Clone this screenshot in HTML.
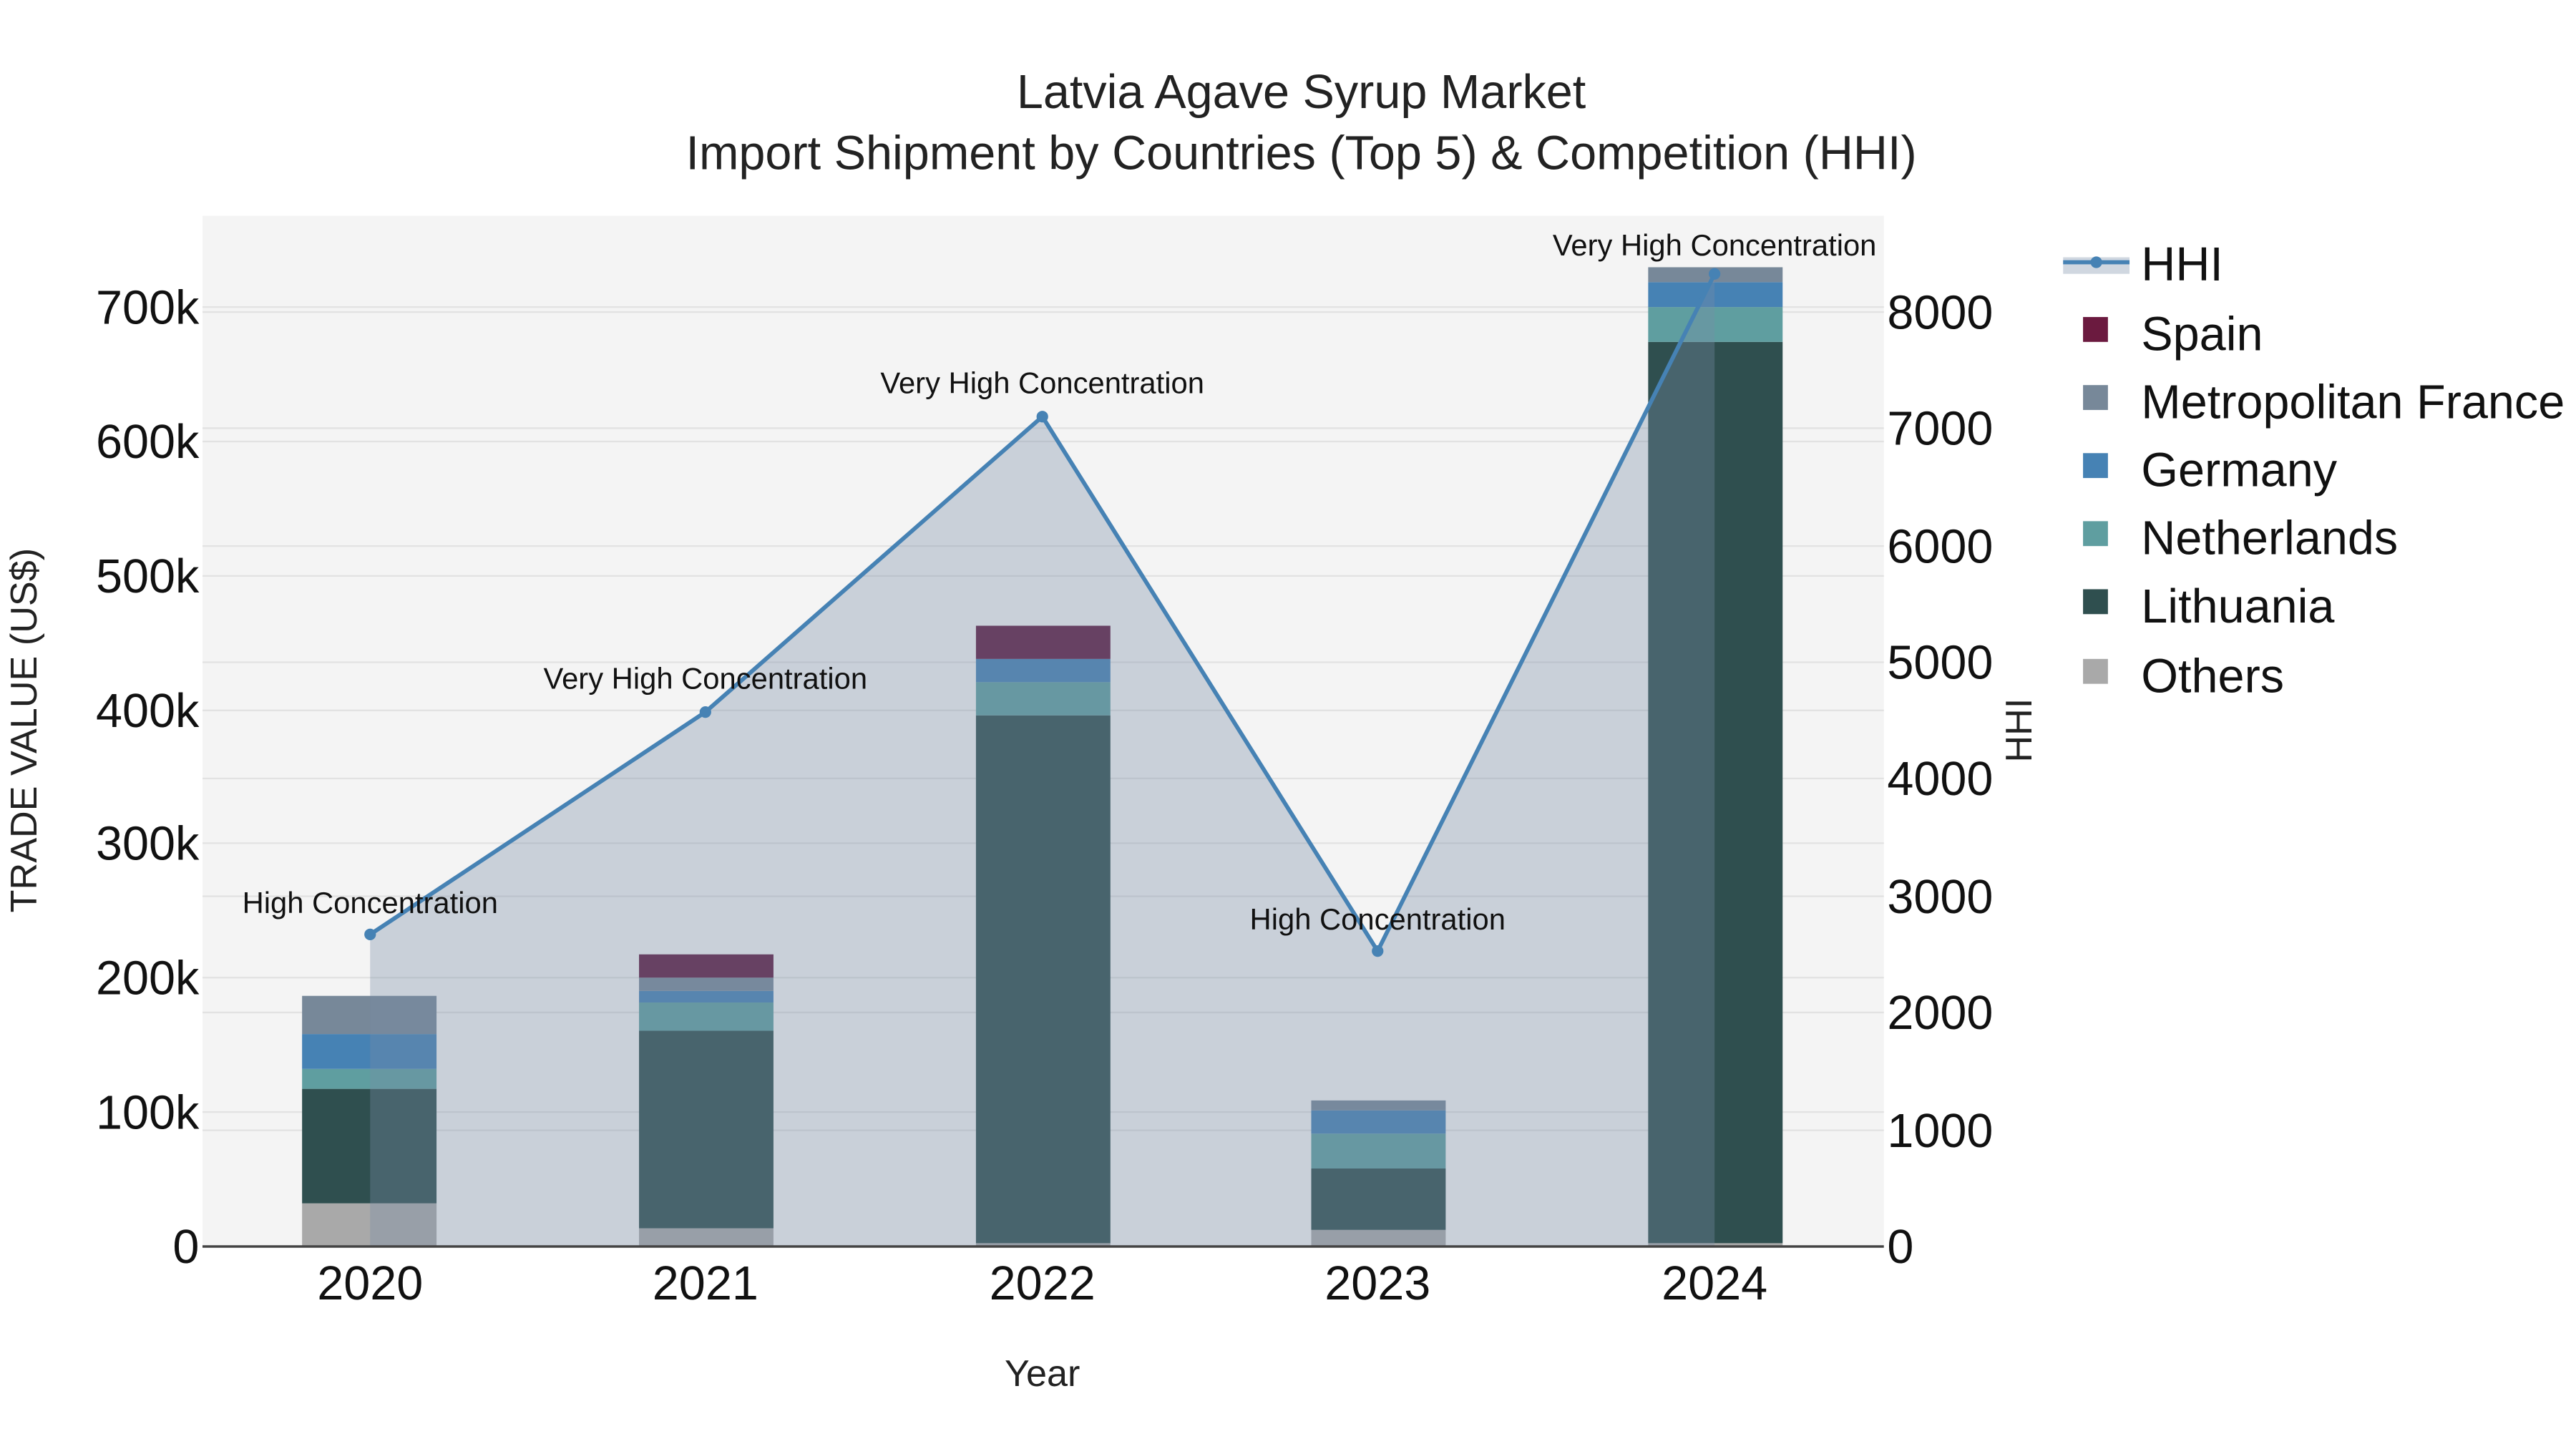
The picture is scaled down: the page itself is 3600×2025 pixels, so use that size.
<!DOCTYPE html>
<html><head><meta charset="utf-8"><style>
html,body{margin:0;padding:0;background:#fff}
svg{display:block}
text{font-family:"Liberation Sans",Arial,sans-serif}
</style></head><body>
<svg width="3600" height="2025" viewBox="0 0 1552 873" xmlns="http://www.w3.org/2000/svg">
<rect width="1552" height="873" fill="#fff"/>
<rect x="122" y="130" width="1013" height="621" fill="#f4f4f4"/>
<g stroke="#e2e2e2" stroke-width="1">
<line x1="122" x2="1135" y1="670" y2="670"/><line x1="122" x2="1135" y1="589" y2="589"/><line x1="122" x2="1135" y1="508" y2="508"/><line x1="122" x2="1135" y1="428" y2="428"/><line x1="122" x2="1135" y1="347" y2="347"/><line x1="122" x2="1135" y1="266" y2="266"/><line x1="122" x2="1135" y1="185" y2="185"/>
<line x1="122" x2="1135" y1="681" y2="681"/><line x1="122" x2="1135" y1="610" y2="610"/><line x1="122" x2="1135" y1="540" y2="540"/><line x1="122" x2="1135" y1="469" y2="469"/><line x1="122" x2="1135" y1="399" y2="399"/><line x1="122" x2="1135" y1="329" y2="329"/><line x1="122" x2="1135" y1="258" y2="258"/><line x1="122" x2="1135" y1="188" y2="188"/>
</g>
<g>
<rect x="182" y="725" width="81" height="26" fill="#a9a9a9"/>
<rect x="182" y="656" width="81" height="69" fill="#2f4f4f"/>
<rect x="182" y="644" width="81" height="12" fill="#5f9ea0"/>
<rect x="182" y="623" width="81" height="21" fill="#4682b4"/>
<rect x="182" y="600" width="81" height="23" fill="#778899"/>

<rect x="385" y="740" width="81" height="11" fill="#a9a9a9"/>
<rect x="385" y="621" width="81" height="119" fill="#2f4f4f"/>
<rect x="385" y="604" width="81" height="17" fill="#5f9ea0"/>
<rect x="385" y="597" width="81" height="7" fill="#4682b4"/>
<rect x="385" y="589" width="81" height="8" fill="#778899"/>
<rect x="385" y="575" width="81" height="14" fill="#5e1a40"/>

<rect x="588" y="749" width="81" height="2" fill="#a9a9a9"/>
<rect x="588" y="431" width="81" height="318" fill="#2f4f4f"/>
<rect x="588" y="411" width="81" height="20" fill="#5f9ea0"/>
<rect x="588" y="397" width="81" height="14" fill="#4682b4"/>
<rect x="588" y="377" width="81" height="20" fill="#5e1a40"/>

<rect x="790" y="741" width="81" height="10" fill="#a9a9a9"/>
<rect x="790" y="704" width="81" height="37" fill="#2f4f4f"/>
<rect x="790" y="683" width="81" height="21" fill="#5f9ea0"/>
<rect x="790" y="669" width="81" height="14" fill="#4682b4"/>
<rect x="790" y="663" width="81" height="6" fill="#778899"/>

<rect x="993" y="749" width="81" height="2" fill="#a9a9a9"/>
<rect x="993" y="206" width="81" height="543" fill="#2f4f4f"/>
<rect x="993" y="185" width="81" height="21" fill="#5f9ea0"/>
<rect x="993" y="170" width="81" height="15" fill="#4682b4"/>
<rect x="993" y="161" width="81" height="9" fill="#778899"/>
</g>
<path d="M223,563 L425,429 L628,251 L830,573 L1033,165 L1033,751 L223,751 Z" fill="rgb(120,140,165)" fill-opacity="0.35"/>
<polyline points="223,563 425,429 628,251 830,573 1033,165" fill="none" stroke="#4682b4" stroke-width="2.5"/>
<g fill="#4682b4"><circle cx="223" cy="563" r="3.5"/><circle cx="425" cy="429" r="3.5"/><circle cx="628" cy="251" r="3.5"/><circle cx="830" cy="573" r="3.5"/><circle cx="1033" cy="165" r="3.5"/></g>
<line x1="122" x2="1135" y1="751" y2="751" stroke="#444" stroke-width="1.5"/>
<g font-size="18" text-anchor="middle" fill="#111">
<text x="223" y="550">High Concentration</text>
<text x="425" y="415">Very High Concentration</text>
<text x="628" y="237">Very High Concentration</text>
<text x="830" y="560">High Concentration</text>
<text x="1033" y="154">Very High Concentration</text>
</g>
<g font-size="28.7" text-anchor="end" fill="#111">
<text x="120" y="761">0</text><text x="120" y="680">100k</text><text x="120" y="599">200k</text><text x="120" y="518">300k</text><text x="120" y="438">400k</text><text x="120" y="357">500k</text><text x="120" y="276">600k</text><text x="120" y="195">700k</text>
</g>
<g font-size="28.7" text-anchor="start" fill="#111">
<text x="1137" y="761">0</text><text x="1137" y="691">1000</text><text x="1137" y="620">2000</text><text x="1137" y="550">3000</text><text x="1137" y="479">4000</text><text x="1137" y="409">5000</text><text x="1137" y="339">6000</text><text x="1137" y="268">7000</text><text x="1137" y="198">8000</text>
</g>
<g font-size="28.7" text-anchor="middle" fill="#111">
<text x="223" y="783">2020</text><text x="425" y="783">2021</text><text x="628" y="783">2022</text><text x="830" y="783">2023</text><text x="1033" y="783">2024</text>
</g>
<text x="628" y="835" font-size="22.5" text-anchor="middle" fill="#222">Year</text>
<text transform="translate(22,440) rotate(-90)" font-size="22.5" text-anchor="middle" fill="#222">TRADE VALUE (US$)</text>
<text transform="translate(1224,440) rotate(-90)" font-size="22.5" text-anchor="middle" fill="#222">HHI</text>
<g font-size="28.7" text-anchor="middle" fill="#222">
<text x="784" y="65">Latvia Agave Syrup Market</text>
<text x="784" y="102">Import Shipment by Countries (Top 5) &amp; Competition (HHI)</text>
</g>
<rect x="1243" y="155" width="40" height="10" fill="rgb(120,140,165)" fill-opacity="0.35"/>
<line x1="1243" x2="1283" y1="158" y2="158" stroke="#4682b4" stroke-width="2.5"/>
<circle cx="1263" cy="158" r="3.5" fill="#4682b4"/>
<rect x="1255" y="191" width="15" height="15" fill="#6b1a3f"/>
<rect x="1255" y="232" width="15" height="15" fill="#778899"/>
<rect x="1255" y="273" width="15" height="15" fill="#4682b4"/>
<rect x="1255" y="314" width="15" height="15" fill="#5f9ea0"/>
<rect x="1255" y="355" width="15" height="15" fill="#2f4f4f"/>
<rect x="1255" y="397" width="15" height="15" fill="#a9a9a9"/>
<g font-size="28.7" fill="#111">
<text x="1290" y="169">HHI</text>
<text x="1290" y="211">Spain</text>
<text x="1290" y="252">Metropolitan France</text>
<text x="1290" y="293">Germany</text>
<text x="1290" y="334">Netherlands</text>
<text x="1290" y="375">Lithuania</text>
<text x="1290" y="417">Others</text>
</g>
</svg>
</body></html>
